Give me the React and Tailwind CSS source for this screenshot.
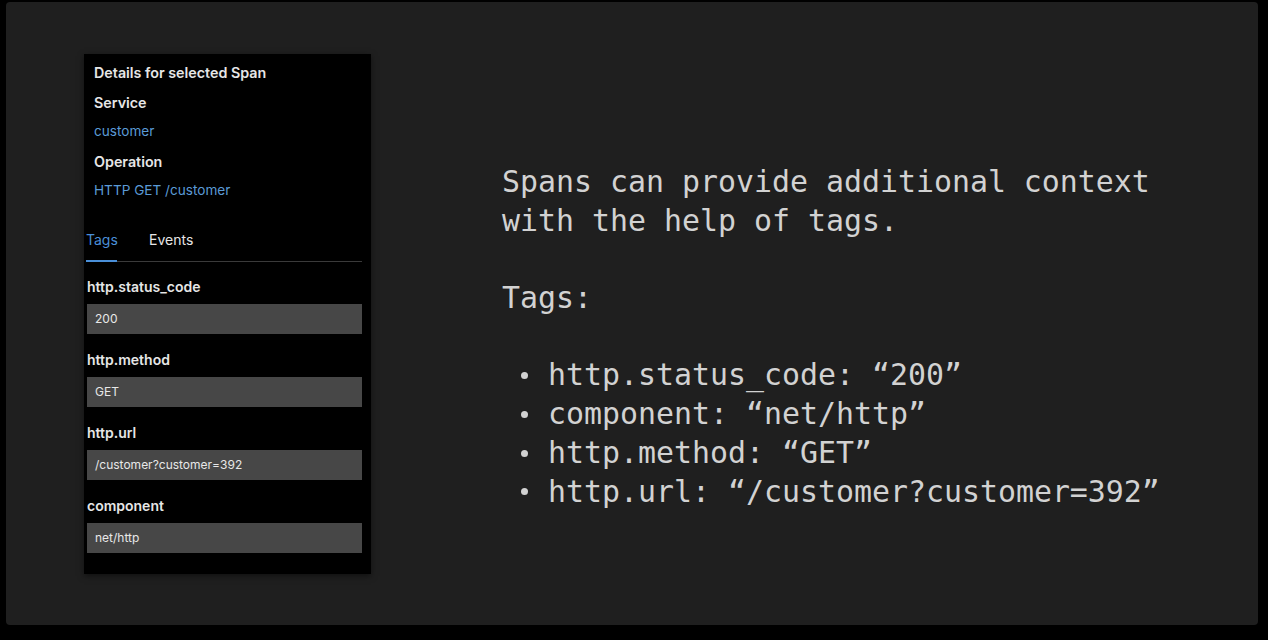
const spanTags = [
  { key: "http.status_code", value: "200" },
  { key: "http.method", value: "GET" },
  { key: "http.url", value: "/customer?customer=392" },
  { key: "component", value: "net/http" },
];

const summaryTags = [
  "http.status_code: \u201c200\u201d",
  "component: \u201cnet/http\u201d",
  "http.method: \u201cGET\u201d",
  "http.url: \u201c/customer?customer=392\u201d",
];

function TagField({ label, value }) {
  return (
    <div className="mb-[16px] last:mb-0">
      <p className="h-[20px] text-[14px] leading-[20px] font-semibold text-[#e6e6e6]">{label}</p>
      <div className="mt-[7px] flex h-[30px] items-center bg-[#474747] px-[8px] text-[12px] text-[#e8e8e8]">{value}</div>
    </div>
  );
}

function SpanDetails() {
  return (
    <section className="flex h-[520px] w-[287px] shrink-0 flex-col bg-black shadow-[0_2px_6px_rgba(0,0,0,0.5)]">
      <div className="px-[10px] pt-[4px] text-[14.3px] leading-[29.5px]">
        <p className="font-semibold text-[#e6e6e6]">Details for selected Span</p>
        <p className="font-semibold text-[#e6e6e6]">Service</p>
        <p className="text-[13.6px] text-[#5b9ad6]">customer</p>
        <p className="font-semibold text-[#e6e6e6]">Operation</p>
        <p className="text-[13.6px] text-[#5b9ad6]">HTTP GET /customer</p>
      </div>
      <div className="mt-[24px] ml-[2px] mr-[9px]">
        <div className="flex border-b border-[#3a3a3a] text-[14px] leading-[20px]">
          <div className="relative w-[63px] pb-[11px] text-[#4a8fd8]">
            Tags
            <span className="absolute bottom-[-1px] left-0 h-[2px] w-[31px] bg-[#4a8fd8]" />
          </div>
          <div className="pb-[11px] text-[#e6e6e6]">Events</div>
        </div>
        <div className="mt-[15px] pl-[1px]">
          {spanTags.map((tag) => (
            <TagField key={tag.key} label={tag.key} value={tag.value} />
          ))}
        </div>
      </div>
    </section>
  );
}

export default function App() {
  return (
    <div className="h-[640px] w-[1268px] bg-black pt-[2px] pl-[6px]">
      <div className="flex h-[623px] w-[1252px] items-start rounded-[4px] bg-[#1f1f1f] pt-[52px] pl-[78px] font-['Inter','Noto_Sans',sans-serif]">
        <SpanDetails />
        <div className="ml-[131px] mt-[109px] font-['DejaVu_Sans_Mono','Liberation_Mono',monospace] text-[29.9px] leading-[38.7px] text-[#d2d2d2]">
          <p>Spans can provide additional context</p>
          <p>with the help of tags.</p>
          <p className="mt-[38.7px]">Tags:</p>
          <ul className="mt-[38.7px]">
            {summaryTags.map((line) => (
              <li key={line} className="flex items-center">
                <span className="ml-[19px] mr-[20px] h-[7px] w-[7px] rounded-full bg-[#d2d2d2]" />
                <span>{line}</span>
              </li>
            ))}
          </ul>
        </div>
      </div>
    </div>
  );
}
